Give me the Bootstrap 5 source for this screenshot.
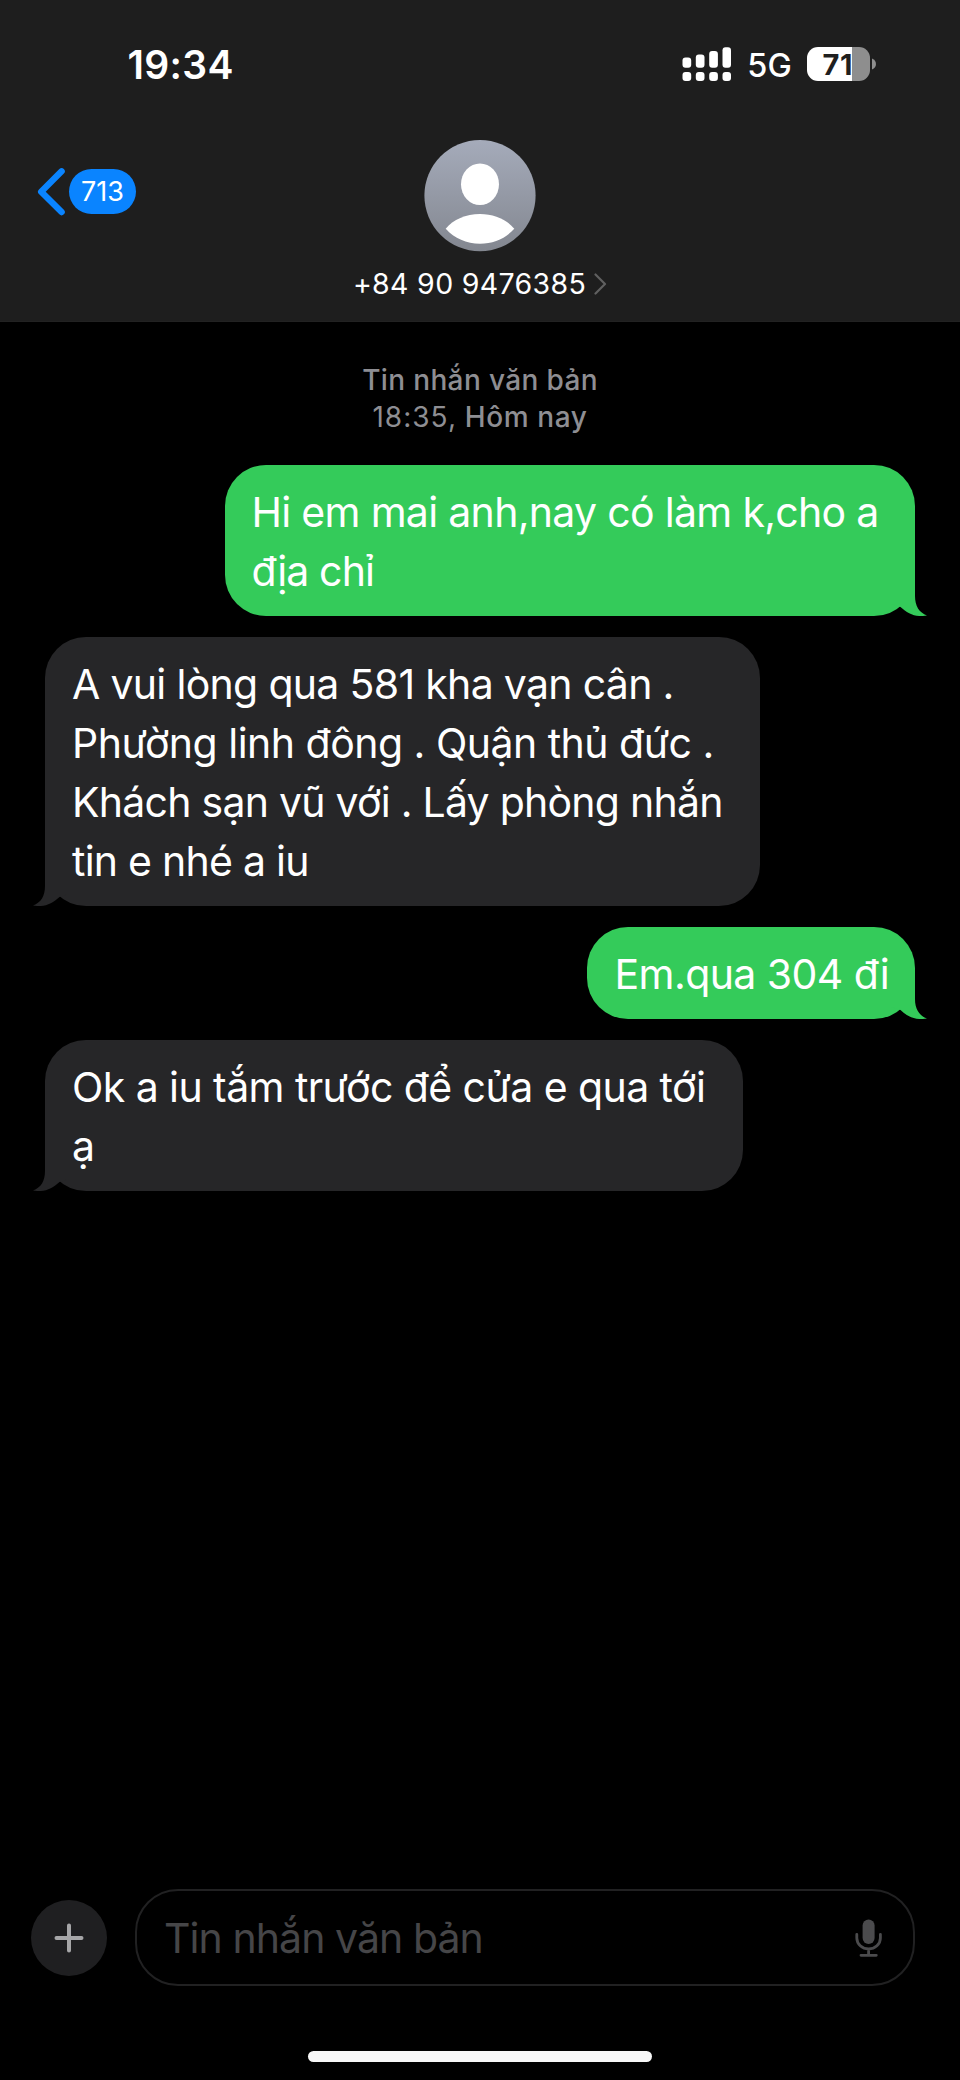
<!DOCTYPE html>
<html lang="vi" data-bs-theme="dark">
<head>
<meta charset="utf-8">
<meta name="viewport" content="width=device-width, initial-scale=1">
<title>Tin nhắn</title>
<link href="https://cdn.jsdelivr.net/npm/bootstrap@5.3.0/dist/css/bootstrap.min.css" rel="stylesheet">
<style>
  body { background: #000; color: #fff; font-family: Inter, "Liberation Sans", sans-serif; }
  svg { display: block; flex: none; }
  .phone { width: 960px; height: 2080px; overflow: hidden; }

  /* header */
  .topbar { height: 322px; background: #1e1e1e; border-bottom: 1px solid #222; }
  .statusbar { height: 128px; padding: 0 84px 0 127.5px; }
  .clock { font-size: 39px; font-weight: 600; line-height: 48px; letter-spacing: .3px; margin-top: 2px; }
  .net { font-size: 32.5px; font-weight: 500; line-height: 40px; letter-spacing: .2px; margin: 4px 14.5px 0 16px; }
  .battery { width: 63.5px; height: 34px; border-radius: 11px; margin-right: 2px; padding-left: 16px;
    background: linear-gradient(90deg, #fff 45.5px, #8e8e8e 45.5px); color: #1f1f1f;
    font-size: 29px; font-weight: 700; line-height: 35px; letter-spacing: .6px; }
  .navrow { height: 193px; padding-left: 37px; }
  .side { width: 200px; padding-top: 39px; }
  .count { width: 67px; height: 45px; margin: 2px 0 0 4px; background: #0a84ff; font-size: 27px; font-weight: 400; letter-spacing: .1px; line-height: 45px; }
  .contact { width: 486px; padding-top: 12px; }
  .number { font-size: 28.5px; line-height: 36px; letter-spacing: .33px; margin-top: 14px; }

  /* conversation */
  .stamp { color: #8e8e93; font-size: 28px; line-height: 37px; font-weight: 500; letter-spacing: .36px; margin-top: 40px; }
  .stamp .hour { font-weight: 400; letter-spacing: 1.03px; }
  .stamp .day { letter-spacing: .6px; }
  .thread { gap: 20.7px; padding: 0 45px; margin-top: 29px; }
  .bubble { position: relative; border-radius: 41px; padding: 17.8px 0 15.7px 27px; font-size: 41px; line-height: 58.9px; white-space: nowrap; }
  .bubble span { display: block; }
  .sent { background: #34cb5a; padding-left: 26.5px; }
  .received { background: #262628; }
  .tail { position: absolute; bottom: 0; }
  .sent .tail { right: -12px; fill: #34cb5a; }
  .received .tail { left: -12px; fill: #262628; transform: scaleX(-1); }
  .w-a { width: 690px; } .w-b { width: 715px; } .w-c { width: 328px; padding-left: 27.5px; } .w-d { width: 698px; }
  .t1 { letter-spacing: -.69px; } .t2 { letter-spacing: -.85px; } .t3 { letter-spacing: -.51px; }
  .t4 { letter-spacing: -.75px; } .t5 { letter-spacing: -.57px; }

  /* composer */
  .composer { height: 97px; padding: 0 45px 0 31px; margin-bottom: 65px; }
  .plus { width: 76px; height: 76px; background: #1f1f21; margin-right: 27.5px; }
  .field { height: 97px; border: 2px solid #212122; border-radius: 43px; padding: 0 31px 0 27.5px; }
  .hint { color: #464648; font-size: 41px; line-height: 58px; letter-spacing: -.93px; }
  .home { width: 344px; height: 11px; background: #f7f7f7; margin: 0 auto 18px; }
</style>
</head>
<body>
<div class="phone d-flex flex-column">
  <header class="topbar flex-shrink-0">
    <div class="statusbar d-flex align-items-center">
      <div class="clock me-auto">19:34</div>
      <svg width="50" height="36" viewBox="0 0 50 36" fill="#fff">
        <rect x="1.5" y="11.5" width="8.7" height="10.2" rx="3"/><rect x="14.8" y="8.6" width="8.7" height="13.1" rx="3"/>
        <rect x="28.2" y="5" width="8.7" height="16.7" rx="3"/><rect x="41.5" y="1.3" width="8.5" height="20.4" rx="3"/>
        <rect x="1.5" y="25.9" width="8.7" height="9" rx="3"/><rect x="14.8" y="25.9" width="8.7" height="9" rx="3"/>
        <rect x="28.2" y="25.9" width="8.7" height="9" rx="3"/><rect x="41.5" y="25.9" width="8.5" height="9" rx="3"/>
      </svg>
      <div class="net">5G</div>
      <div class="battery">71</div>
      <svg width="4" height="12" viewBox="0 0 4 12"><path d="M0 .5C5.3 2.300 5.3 9.700 0 11.500Z" fill="#8e8e8e"/></svg>
    </div>
    <nav class="navrow d-flex">
      <div class="side d-flex align-items-start">
        <svg width="28" height="50" viewBox="0 0 28 50" fill="none" stroke="#0a84ff" stroke-width="6.400" stroke-linecap="round" stroke-linejoin="round"><path d="M24.600 4.300 4.200 24.700 24.600 45"/></svg>
        <div class="count rounded-pill text-center">713</div>
      </div>
      <div class="contact d-flex flex-column align-items-center">
        <svg width="112" height="112" viewBox="0 0 112 112">
          <defs><linearGradient id="face" x1="0" y1="0" x2="0" y2="1"><stop offset="0" stop-color="#a5abba"/><stop offset="1" stop-color="#838790"/></linearGradient></defs>
          <circle cx="56" cy="55.600" r="55.600" fill="url(#face)"/>
          <ellipse cx="56" cy="44.300" rx="19" ry="20.800" fill="#fff"/>
          <path d="M21.700 88.800C29 79.500 42 74 56 74s27 5.500 34.300 14.800C81.500 98.500 69.500 103.700 56 103.700S30.500 98.500 21.700 88.800Z" fill="#fff"/>
        </svg>
        <div class="number d-flex align-items-center">
          <span>+84 90 9476385</span>
          <svg class="ms-2" width="13" height="22" viewBox="0 0 13 22" fill="none" stroke="#606060" stroke-width="2.200" stroke-linecap="round" stroke-linejoin="round"><path d="M1.500 1.500 11 11 1.500 20.500"/></svg>
        </div>
      </div>
    </nav>
  </header>

  <div class="stamp text-center">Tin nhắn văn bản<br><span class="hour">18:35,</span> <span class="day">Hôm nay</span></div>

  <main class="thread d-flex flex-column flex-grow-1">
    <div class="bubble sent w-a align-self-end">
      <span class="t1">Hi em mai anh,nay có làm k,cho a</span>
      <span class="t2">địa chỉ</span>
      <svg class="tail" width="36" height="46" viewBox="0 -14 36 46"><path d="M0 -14H24V12C24 22 28 28.500 36 31.500C25 33.500 17 30 9.500 23L0 20Z"/></svg>
    </div>
    <div class="bubble received w-b">
      <span class="t1">A vui lòng qua 581 kha vạn cân .</span>
      <span class="t3">Phường linh đông . Quận thủ đức .</span>
      <span class="t4">Khách sạn vũ với . Lấy phòng nhắn</span>
      <span class="t4">tin e nhé a iu</span>
      <svg class="tail" width="36" height="46" viewBox="0 -14 36 46"><path d="M0 -14H24V12C24 22 28 28.500 36 31.500C25 33.500 17 30 9.500 23L0 20Z"/></svg>
    </div>
    <div class="bubble sent w-c align-self-end">
      <span class="t5">Em.qua 304 đi</span>
      <svg class="tail" width="36" height="46" viewBox="0 -14 36 46"><path d="M0 -14H24V12C24 22 28 28.500 36 31.500C25 33.500 17 30 9.500 23L0 20Z"/></svg>
    </div>
    <div class="bubble received w-d">
      <span class="t5">Ok a iu tắm trước để cửa e qua tới</span>
      <span class="t5">ạ</span>
      <svg class="tail" width="36" height="46" viewBox="0 -14 36 46"><path d="M0 -14H24V12C24 22 28 28.500 36 31.500C25 33.500 17 30 9.500 23L0 20Z"/></svg>
    </div>
  </main>

  <footer class="flex-shrink-0">
    <div class="composer d-flex align-items-center">
      <div class="plus rounded-circle d-flex align-items-center justify-content-center">
        <svg width="30" height="30" viewBox="0 0 30 30" stroke="#a6a6a8" stroke-width="4" stroke-linecap="round"><path d="M15 2.500V27.500M2.500 15H27.500"/></svg>
      </div>
      <div class="field d-flex align-items-center justify-content-between flex-grow-1">
        <span class="hint">Tin nhắn văn bản</span>
        <svg width="27" height="38" viewBox="0 0 27 38" fill="none" stroke="#4b4b4d" stroke-width="2.800" stroke-linecap="round"><rect x="7.600" y=".5" width="12" height="24.500" rx="6" fill="#4b4b4d" stroke="none"/><path d="M1.800 15.500V19A11.800 11 0 0 0 25.400 19V15.500M13.600 30V36M6 36.300H21.300"/></svg>
      </div>
    </div>
    <div class="home rounded-pill"></div>
  </footer>
</div>
<script src="https://cdn.jsdelivr.net/npm/bootstrap@5.3.0/dist/js/bootstrap.bundle.min.js"></script>
</body>
</html>
